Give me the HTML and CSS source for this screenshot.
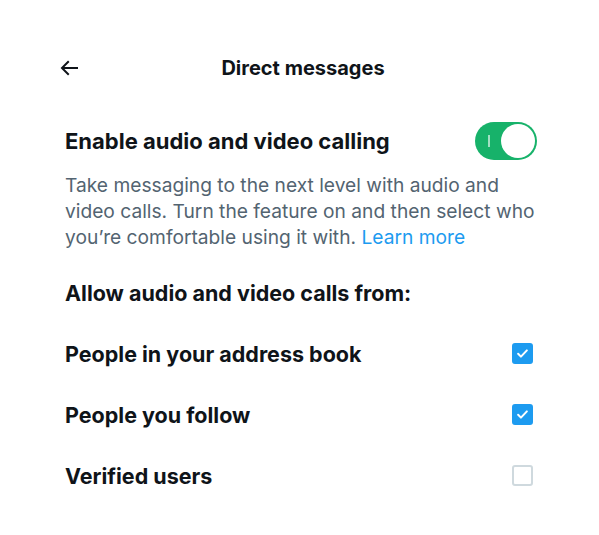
FILE: index.html
```html
<!DOCTYPE html>
<html lang="en">
<head>
  <meta charset="UTF-8">
  <title>Direct messages</title>
  <meta name="viewport" content="width=device-width, initial-scale=1.0">
  <link rel="stylesheet" href="styles.css">
</head>
<body>
  <div class="page">
    <header class="topbar">
      <button class="back" aria-label="Back">
        <svg viewBox="0 0 24 24" width="24" height="24">
          <path d="M7.414 13l5.043 5.04-1.414 1.42L3.586 12l7.457-7.46 1.414 1.42L7.414 11H21v2H7.414z"/>
        </svg>
      </button>
      <h1>Direct messages</h1>
    </header>

    <section class="setting">
      <div class="setting-row">
        <h2>Enable audio and video calling</h2>
        <div class="toggle on">
          <span class="toggle-mark"></span>
          <span class="toggle-knob"></span>
        </div>
      </div>
      <p class="desc">
        Take messaging to the next level with audio and video calls. Turn the feature on and then select who you’re comfortable using it with. <a href="#">Learn more</a>
      </p>
    </section>

    <h3 class="group-title">Allow audio and video calls from:</h3>

    <ul class="options">
      <li class="option">
        <span>People in your address book</span>
        <span class="check checked">
          <svg viewBox="0 0 24 24" width="15" height="15"><path d="M5 12.5l4.5 4.5L19 7"/></svg>
        </span>
      </li>
      <li class="option">
        <span>People you follow</span>
        <span class="check checked">
          <svg viewBox="0 0 24 24" width="15" height="15"><path d="M5 12.5l4.5 4.5L19 7"/></svg>
        </span>
      </li>
      <li class="option">
        <span>Verified users</span>
        <span class="check"></span>
      </li>
    </ul>
  </div>
</body>
</html>
```

FILE: styles.css
```css
* {
  box-sizing: border-box;
}

body {
  margin: 0;
  font-family: Inter, "Liberation Sans", sans-serif;
  background: #ffffff;
  color: #0f1419;
}

.page {
  padding: 40px 62px 0 65px;
}

.topbar {
  position: relative;
  height: 56px;
  display: flex;
  align-items: center;
  justify-content: center;
}

.back {
  position: absolute;
  left: -8px;
  top: 16px;
  border: none;
  background: none;
  padding: 0;
  width: 24px;
  height: 24px;
  cursor: pointer;
}

.back svg {
  fill: #0f1419;
  display: block;
}

.topbar h1 {
  margin: 0;
  font-size: 20px;
  font-weight: 700;
  margin-left: 4px;
}

.setting {
  margin-top: 26px;
}

.setting-row {
  display: flex;
  align-items: center;
  justify-content: space-between;
}

.setting-row h2 {
  margin: 0;
  font-size: 22px;
  font-weight: 700;
}

.toggle {
  position: relative;
  width: 62px;
  height: 38px;
  border-radius: 19px;
  background: #e5e7e9;
}

.toggle.on {
  background: #17b26a;
}

.toggle-mark {
  position: absolute;
  left: 13px;
  top: 13px;
  width: 2px;
  height: 12px;
  background: rgba(255, 255, 255, 0.6);
}

.toggle-knob {
  position: absolute;
  right: 2px;
  top: 2px;
  width: 34px;
  height: 34px;
  border-radius: 50%;
  background: #ffffff;
}

.desc {
  margin: 12px 0 0;
  max-width: 482px;
  font-size: 19.2px;
  line-height: 26px;
  color: #536471;
}

.desc a {
  color: #1d9bf0;
  text-decoration: none;
}

.group-title {
  margin: 30px 0 0;
  font-size: 21.5px;
  font-weight: 700;
}

.options {
  list-style: none;
  margin: 17px 0 0;
  padding: 0;
}

.option {
  display: flex;
  align-items: center;
  justify-content: space-between;
  height: 61px;
  font-size: 21.5px;
  font-weight: 700;
  padding-right: 4px;
}

.check {
  width: 21px;
  height: 21px;
  border-radius: 3px;
  border: 2px solid #cfd9de;
  display: flex;
  align-items: center;
  justify-content: center;
}

.check.checked {
  background: #1d9bf0;
  border-color: #1d9bf0;
}

.check svg {
  fill: none;
  stroke: #ffffff;
  stroke-width: 3.2;
  stroke-linecap: round;
  stroke-linejoin: round;
  display: block;
}
```
